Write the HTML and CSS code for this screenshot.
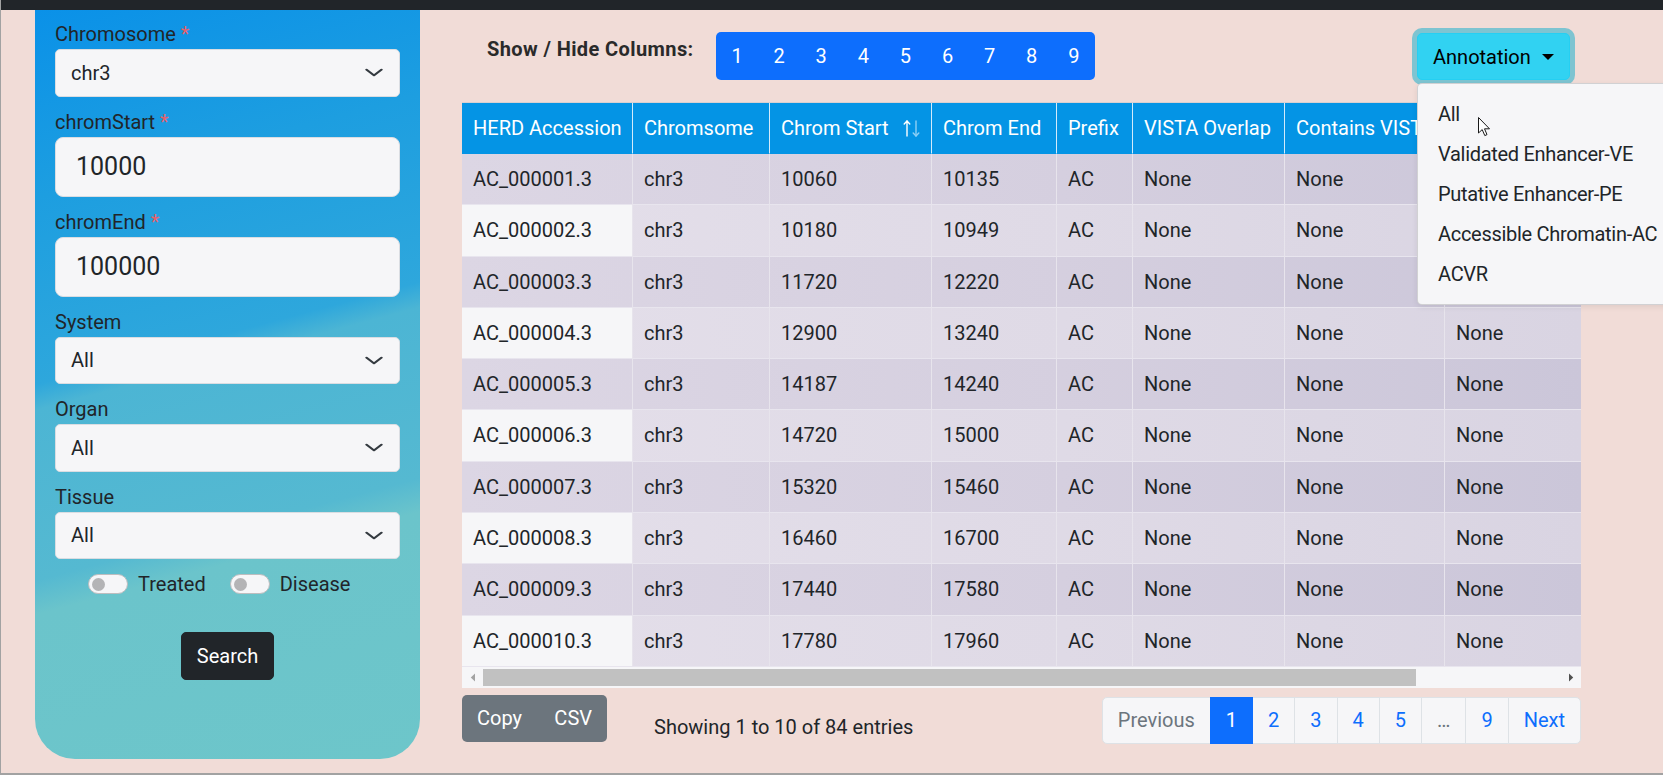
FILE: index.html
```html
<!DOCTYPE html>
<html lang="en">
<head>
<meta charset="utf-8">
<title>HERD Search</title>
<link rel="stylesheet" href="styles.css">
</head>
<body>
<div class="frame">
  <div class="topbar"></div>
  <div class="layout">
    <aside class="sidebar">
      <div class="field">
        <label class="lbl">Chromosome <span class="req">*</span></label>
        <div class="select"><span>chr3</span><svg width="20" height="15" viewBox="0 0 16 16" preserveAspectRatio="none"><path d="m2 5 6 6 6-6" fill="none" stroke="#343a40" stroke-width="2" stroke-linecap="round" stroke-linejoin="round"/></svg></div>
      </div>
      <div class="field">
        <label class="lbl">chromStart <span class="req">*</span></label>
        <div class="input-lg">10000</div>
      </div>
      <div class="field">
        <label class="lbl">chromEnd <span class="req">*</span></label>
        <div class="input-lg">100000</div>
      </div>
      <div class="field">
        <label class="lbl">System</label>
        <div class="select"><span>All</span><svg width="20" height="15" viewBox="0 0 16 16" preserveAspectRatio="none"><path d="m2 5 6 6 6-6" fill="none" stroke="#343a40" stroke-width="2" stroke-linecap="round" stroke-linejoin="round"/></svg></div>
      </div>
      <div class="field">
        <label class="lbl">Organ</label>
        <div class="select"><span>All</span><svg width="20" height="15" viewBox="0 0 16 16" preserveAspectRatio="none"><path d="m2 5 6 6 6-6" fill="none" stroke="#343a40" stroke-width="2" stroke-linecap="round" stroke-linejoin="round"/></svg></div>
      </div>
      <div class="field">
        <label class="lbl">Tissue</label>
        <div class="select"><span>All</span><svg width="20" height="15" viewBox="0 0 16 16" preserveAspectRatio="none"><path d="m2 5 6 6 6-6" fill="none" stroke="#343a40" stroke-width="2" stroke-linecap="round" stroke-linejoin="round"/></svg></div>
      </div>
      <div class="switch-row">
        <div class="check"><span class="switch"><span class="knob"></span></span><span>Treated</span></div>
        <div class="check"><span class="switch"><span class="knob"></span></span><span>Disease</span></div>
      </div>
      <button class="search-btn">Search</button>
    </aside>

    <main class="content">
      <div class="toolbar">
        <div class="toolbar-label">Show / Hide Columns:</div>
        <div class="colbtns">
          <span>1</span><span>2</span><span>3</span><span>4</span><span>5</span><span>6</span><span>7</span><span>8</span><span>9</span>
        </div>
        <div class="annot">
          <div class="annot-btn"><span>Annotation</span><span class="caret"></span></div>
          <div class="menu">
            <div class="menu-item">All</div>
            <div class="menu-item">Validated Enhancer-VE</div>
            <div class="menu-item">Putative Enhancer-PE</div>
            <div class="menu-item">Accessible Chromatin-AC</div>
            <div class="menu-item">ACVR</div>
            <svg class="cursor" width="13" height="20" viewBox="0 0 13 20"><path d="M0.5 0.5 L0.5 16 L4.2 12.6 L6.8 18.6 L9 17.6 L6.5 11.8 L11.5 11.8 Z" fill="#fff" stroke="#1a1a1a" stroke-width="1" stroke-linejoin="round"/></svg>
          </div>
        </div>
      </div>

      <div class="table-wrap">
        <table class="grid">
          <colgroup>
            <col class="c1"><col class="c2"><col class="c3"><col class="c4"><col class="c5"><col class="c6"><col class="c7"><col class="c8"><col class="c9">
          </colgroup>
          <thead>
            <tr>
              <th>HERD Accession</th>
              <th>Chromsome</th>
              <th>Chrom Start<svg class="sort" width="18" height="19" viewBox="0 0 18 19"><g fill="none" stroke-width="1.4" stroke-linecap="round" stroke-linejoin="round"><g stroke="#ffffff"><path d="M4 2 V17"/><path d="M1.2 5 L4 2 L6.8 5"/></g><g stroke="#8fd0f5"><path d="M13 2 V17"/><path d="M10.2 14 L13 17 L15.8 14"/></g></g></svg></th>
              <th>Chrom End</th>
              <th>Prefix</th>
              <th>VISTA Overlap</th>
              <th>Contains VISTA</th>
              <th>Annotation</th>
              <th>Details</th>
            </tr>
          </thead>
          <tbody>
            <tr><td>AC_000001.3</td><td>chr3</td><td>10060</td><td>10135</td><td>AC</td><td>None</td><td>None</td><td>None</td><td>None</td></tr>
            <tr><td>AC_000002.3</td><td>chr3</td><td>10180</td><td>10949</td><td>AC</td><td>None</td><td>None</td><td>None</td><td>None</td></tr>
            <tr><td>AC_000003.3</td><td>chr3</td><td>11720</td><td>12220</td><td>AC</td><td>None</td><td>None</td><td>None</td><td>None</td></tr>
            <tr><td>AC_000004.3</td><td>chr3</td><td>12900</td><td>13240</td><td>AC</td><td>None</td><td>None</td><td>None</td><td>None</td></tr>
            <tr><td>AC_000005.3</td><td>chr3</td><td>14187</td><td>14240</td><td>AC</td><td>None</td><td>None</td><td>None</td><td>None</td></tr>
            <tr><td>AC_000006.3</td><td>chr3</td><td>14720</td><td>15000</td><td>AC</td><td>None</td><td>None</td><td>None</td><td>None</td></tr>
            <tr><td>AC_000007.3</td><td>chr3</td><td>15320</td><td>15460</td><td>AC</td><td>None</td><td>None</td><td>None</td><td>None</td></tr>
            <tr><td>AC_000008.3</td><td>chr3</td><td>16460</td><td>16700</td><td>AC</td><td>None</td><td>None</td><td>None</td><td>None</td></tr>
            <tr><td>AC_000009.3</td><td>chr3</td><td>17440</td><td>17580</td><td>AC</td><td>None</td><td>None</td><td>None</td><td>None</td></tr>
            <tr><td>AC_000010.3</td><td>chr3</td><td>17780</td><td>17960</td><td>AC</td><td>None</td><td>None</td><td>None</td><td>None</td></tr>
          </tbody>
        </table>
      </div>
      <div class="hscroll">
        <span class="arrow"><svg width="6" height="9" viewBox="0 0 6 9"><path d="M5 0.5 L0.8 4.5 L5 8.5 Z" fill="#a3a3a3"/></svg></span>
        <span class="track"><span class="thumb"></span></span>
        <span class="arrow"><svg width="6" height="9" viewBox="0 0 6 9"><path d="M1 0.5 L5.2 4.5 L1 8.5 Z" fill="#505050"/></svg></span>
      </div>

      <div class="footer">
        <div class="copycsv"><span>Copy</span><span>CSV</span></div>
        <div class="info">Showing 1 to 10 of 84 entries</div>
        <div class="pager">
          <span class="pg disabled">Previous</span>
          <span class="pg active">1</span>
          <span class="pg">2</span>
          <span class="pg">3</span>
          <span class="pg">4</span>
          <span class="pg">5</span>
          <span class="pg ell">…</span>
          <span class="pg">9</span>
          <span class="pg">Next</span>
        </div>
      </div>
    </main>
  </div>
</div>
</body>
</html>
```
FILE: styles.css
```css
html, body {
  margin: 0;
  padding: 0;
  background: #f1dcd7;
}
body {
  font-family: Roboto, "Noto Sans", sans-serif;
  font-size: 20px;
  line-height: 1.5;
  color: #212529;
}
.frame {
  width: 1663px;
  height: 775px;
  box-sizing: border-box;
  border-left: 1px solid #a2a2a2;
  border-bottom: 2px solid #a2a2a2;
  overflow: hidden;
  position: relative;
}
.topbar {
  height: 10px;
  background: #212529;
}
.layout {
  display: flex;
  align-items: flex-start;
  padding-left: 34px;
}

/* Sidebar */
.sidebar {
  flex: none;
  width: 385px;
  height: 749px;
  box-sizing: border-box;
  padding: 9px 20px 0;
  border-radius: 0 0 40px 40px;
  background: linear-gradient(165deg, #0a91e8 0%, #1d9ee0 22%, #2ea7dc 44%, #4cb5d4 47%, #55b9d1 67%, #6bc4cb 71%, #6dc6ca 100%);
}
.field {
  margin-bottom: 10px;
}
.lbl {
  display: block;
  line-height: 30px;
  font-size: 20px;
  color: #212529;
}
.req {
  color: #e8606a;
}
.select {
  height: 47.5px;
  box-sizing: border-box;
  border: 1px solid #dadde2;
  border-radius: 5px;
  background: #f6f6f8;
  display: flex;
  align-items: center;
  justify-content: space-between;
  padding: 0 15px 0 15px;
  font-size: 20px;
}
.select svg {
  display: block;
}
.input-lg {
  height: 60px;
  box-sizing: border-box;
  border: 1px solid #dadde2;
  border-radius: 8px;
  background: #f6f6f8;
  display: flex;
  align-items: center;
  padding: 0 20px;
  font-size: 25px;
}
.switch-row {
  display: flex;
  align-items: center;
  gap: 24px;
  padding-left: 33px;
  height: 30px;
}
.check {
  display: flex;
  align-items: center;
  gap: 10px;
}
.switch {
  width: 40px;
  height: 20px;
  box-sizing: border-box;
  border: 1px solid #bdbdbf;
  border-radius: 10px;
  background: #f6f6f8;
  display: flex;
  align-items: center;
  padding-left: 3px;
}
.knob {
  width: 13px;
  height: 13px;
  border-radius: 50%;
  background: #b4b4b6;
}
.search-btn {
  display: block;
  margin: 33px auto 0;
  height: 47.5px;
  padding: 0 15px;
  border: 1px solid #212529;
  border-radius: 5px;
  background: #212529;
  color: #fff;
  font-family: Roboto, "Noto Sans", sans-serif;
  font-size: 20px;
}

/* Content */
.content {
  margin-left: 42px;
  width: 1119px;
  padding-top: 22px;
}
.toolbar {
  display: flex;
  align-items: flex-start;
  height: 48px;
  margin-bottom: 22px;
}
.toolbar-label {
  flex: none;
  width: 208px;
  margin-left: 25px;
  margin-right: 21px;
  margin-top: 2px;
  line-height: 30px;
  font-weight: 700;
  font-size: 20px;
  letter-spacing: 0.4px;
  color: #2a2a2a;
  white-space: nowrap;
}
.colbtns {
  display: flex;
  background: #0d6efd;
  border-radius: 5px;
}
.colbtns span {
  width: 42.1px;
  height: 48px;
  line-height: 48px;
  text-align: center;
  color: #fff;
}
.annot {
  margin-left: auto;
  margin-right: 11px;
  margin-top: 1px;
  position: relative;
}
.annot-btn {
  width: 153px;
  height: 47px;
  box-sizing: border-box;
  display: flex;
  align-items: center;
  justify-content: space-between;
  padding: 0 15px;
  background: #31d2f2;
  border: 1px solid #25cff2;
  border-radius: 5px;
  color: #000;
  box-shadow: 0 0 0 5px rgba(11, 172, 204, 0.5);
}
.caret {
  width: 0;
  height: 0;
  border-top: 6px solid #000;
  border-left: 6px solid transparent;
  border-right: 6px solid transparent;
}
.menu {
  position: absolute;
  top: calc(100% + 3px);
  left: 0;
  width: 262px;
  box-sizing: border-box;
  padding: 10px 0;
  background: #f6f6f8;
  border: 1px solid rgba(0, 0, 0, 0.15);
  border-radius: 5px;
  box-shadow: 0 2px 6px rgba(0, 0, 0, 0.08);
  z-index: 5;
}
.menu-item {
  padding: 5px 20px;
  line-height: 30px;
  white-space: nowrap;
  letter-spacing: -0.3px;
  color: #212529;
}
.cursor {
  position: absolute;
  left: 60px;
  top: 33px;
}

/* Table */
.table-wrap {
  width: 1119px;
  overflow: hidden;
  border-top: 1px solid #d8d0d1;
}
.grid {
  table-layout: fixed;
  width: 1292px;
  border-collapse: separate;
  border-spacing: 0;
}
.c1 { width: 171px; }
.c2 { width: 137px; }
.c3 { width: 162px; }
.c4 { width: 125px; }
.c5 { width: 76px; }
.c6 { width: 152px; }
.c7 { width: 160px; }
.c8 { width: 150px; }
.c9 { width: 159px; }
.grid th {
  background: #0494e5;
  color: #fff;
  font-weight: 400;
  text-align: left;
  padding: 10px 10px 10px 11px;
  line-height: 30px;
  border-right: 1px solid #d3ebfb;
  border-bottom: 1px solid #0494e5;
  white-space: nowrap;
  overflow: hidden;
}
.grid th .sort {
  float: right;
  margin-top: 6px;
}
.grid td {
  padding: 10px 10px 10px 11px;
  line-height: 30.3px;
  border-right: 1px solid #e7e4ec;
  border-bottom: 1px solid #e8e5ee;
  white-space: nowrap;
}
.grid tbody tr:nth-child(odd) {
  background: linear-gradient(90deg, #dcd6e4 0px, #d5cfdf 600px, #cbc6d9 1120px, #cbc6d9 1292px);
}
.grid tbody tr:nth-child(even) {
  background: linear-gradient(90deg, #e4dfea 0px, #dfdae6 600px, #d9d4e2 1120px, #d9d4e2 1292px);
}
.grid tbody tr:nth-child(even) td:first-child {
  background: #f6f6f8;
}

/* Fake horizontal scrollbar */
.hscroll {
  display: flex;
  align-items: center;
  height: 21px;
  background: #f6f6f8;
}
.arrow {
  width: 21px;
  height: 21px;
  display: flex;
  align-items: center;
  justify-content: center;
}
.arrow svg {
  display: block;
}
.track {
  flex: 1;
  height: 17px;
}
.thumb {
  display: block;
  width: 933px;
  height: 17px;
  background: #c1c1c1;
}

/* Footer */
.footer {
  display: flex;
  align-items: flex-start;
  margin-top: 7px;
}
.copycsv {
  display: flex;
  width: 145px;
  height: 47.5px;
  background: #6c757d;
  border-radius: 5px;
  color: #fff;
}
.copycsv span {
  padding: 0 15px;
  line-height: 47.5px;
}
.copycsv span + span {
  margin-left: auto;
}
.info {
  margin-left: 47px;
  padding-top: 17px;
  line-height: 30px;
}
.pager {
  margin-left: auto;
  margin-top: 2px;
  display: flex;
}
.pg {
  height: 47.5px;
  box-sizing: border-box;
  padding: 0 15px;
  line-height: 45.5px;
  border: 1px solid #dee2e6;
  margin-left: -1px;
  background: #f6f6f8;
  color: #0d6efd;
}
.pg:first-child {
  margin-left: 0;
  border-radius: 5px 0 0 5px;
}
.pg:last-child {
  border-radius: 0 5px 5px 0;
}
.pg.disabled {
  color: #6c757d;
}
.pg.active {
  background: #0d6efd;
  border-color: #0d6efd;
  color: #fff;
  position: relative;
}
.pg.ell {
  color: #6c757d;
}
```
